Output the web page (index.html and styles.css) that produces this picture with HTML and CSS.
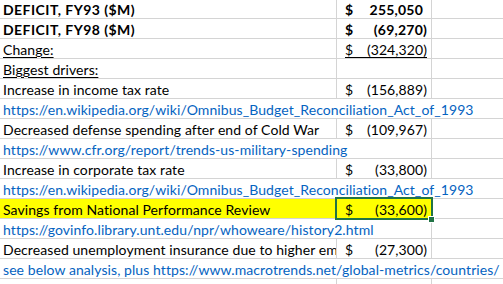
FILE: index.html
```html
<!DOCTYPE html>
<html>
<head>
<meta charset="utf-8">
<link rel="stylesheet" href="styles.css">
</head>
<body>
<div class="sheet">
  <div class="row">
    <div class="cell b">DEFICIT, FY93 ($M)</div>
    <div class="cell acct b"><span>$</span><span class="pos">255,050</span></div>
    <div class="cell"></div>
  </div>
  <div class="row">
    <div class="cell b">DEFICIT, FY98 ($M)</div>
    <div class="cell acct b"><span>$</span><span>(69,270)</span></div>
    <div class="cell"></div>
  </div>
  <div class="row">
    <div class="cell"><span class="u">Change:</span></div>
    <div class="cell acct"><span class="ul-box"><span class="u">$</span><span>(324,320)</span></span></div>
    <div class="cell"></div>
  </div>
  <div class="row">
    <div class="cell"><span class="u">Biggest drivers:</span></div>
    <div class="cell"></div>
    <div class="cell"></div>
  </div>
  <div class="row">
    <div class="cell">Increase in income tax rate</div>
    <div class="cell acct"><span>$</span><span>(156,889)</span></div>
    <div class="cell"></div>
  </div>
  <div class="row">
    <div class="cell link span3">https://en.wikipedia.org/wiki/Omnibus_Budget_Reconciliation_Act_of_1993</div>
  </div>
  <div class="row">
    <div class="cell">Decreased defense spending after end of Cold War</div>
    <div class="cell acct"><span>$</span><span>(109,967)</span></div>
    <div class="cell"></div>
  </div>
  <div class="row">
    <div class="cell link span2">https://www.cfr.org/report/trends-us-military-spending</div>
    <div class="cell"></div>
  </div>
  <div class="row">
    <div class="cell">Increase in corporate tax rate</div>
    <div class="cell acct"><span>$</span><span>(33,800)</span></div>
    <div class="cell"></div>
  </div>
  <div class="row">
    <div class="cell link span3">https://en.wikipedia.org/wiki/Omnibus_Budget_Reconciliation_Act_of_1993</div>
  </div>
  <div class="row">
    <div class="cell hl">Savings from National Performance Review</div>
    <div class="cell acct hl sel"><span>$</span><span>(33,600)</span><i class="handle"></i></div>
    <div class="cell"></div>
  </div>
  <div class="row">
    <div class="cell link span2">https://govinfo.library.unt.edu/npr/whoweare/history2.html</div>
    <div class="cell"></div>
  </div>
  <div class="row">
    <div class="cell">Decreased unemployment insurance due to higher em</div>
    <div class="cell acct"><span>$</span><span>(27,300)</span></div>
    <div class="cell"></div>
  </div>
  <div class="row">
    <div class="cell link span3">see below analysis, plus https://www.macrotrends.net/global-metrics/countries/</div>
  </div>
  <div class="row">
    <div class="cell"></div>
    <div class="cell"></div>
    <div class="cell"></div>
  </div>
</div>
</body>
</html>
```

FILE: styles.css
```css
html, body {
  margin: 0;
  padding: 0;
  background: #fff;
  overflow: hidden;
}
.sheet {
  width: 503px;
  height: 284px;
  overflow: hidden;
  font-family: "Lato", "Open Sans", sans-serif;
  font-size: 14px;
  letter-spacing: 0.08px;
  color: #000;
}
.row {
  display: grid;
  grid-template-columns: 337px 95px 200px;
  height: 20px;
}
.row:first-child { margin-top: -1px; }
.cell {
  box-sizing: border-box;
  height: 20px;
  border-right: 1px solid #d4d4d4;
  border-bottom: 1px solid #d4d4d4;
  padding: 0 3px;
  line-height: 21px;
  white-space: nowrap;
  overflow: hidden;
}
.span2 { grid-column: span 2; }
.span3 { grid-column: span 3; }
.b { font-weight: bold; letter-spacing: 0.45px; }
.acct.b { letter-spacing: 0.2px; }
.u { text-decoration: underline; text-underline-offset: 2px; }
.link {
  color: #0563c1;
  text-decoration: underline;
  text-underline-offset: 3px;
}
.acct {
  display: flex;
  justify-content: space-between;
  padding: 0 4px 0 8px;
}
.pos { padding-right: 4px; }
.ul-box {
  display: flex;
  justify-content: space-between;
  width: 100%;
  height: 18px;
  border-bottom: 1px solid #000;
  line-height: 21px;
}
.hl { background: #ffff00; }
.sel {
  position: relative;
  overflow: visible;
}
.sel::after {
  content: "";
  position: absolute;
  left: -2px;
  top: -2px;
  right: -2px;
  bottom: -2px;
  border: 2px solid #217346;
}
.handle {
  position: absolute;
  right: -4px;
  bottom: -5px;
  width: 5px;
  height: 5px;
  background: #217346;
  border: 1px solid #fff;
  z-index: 2;
}
```
